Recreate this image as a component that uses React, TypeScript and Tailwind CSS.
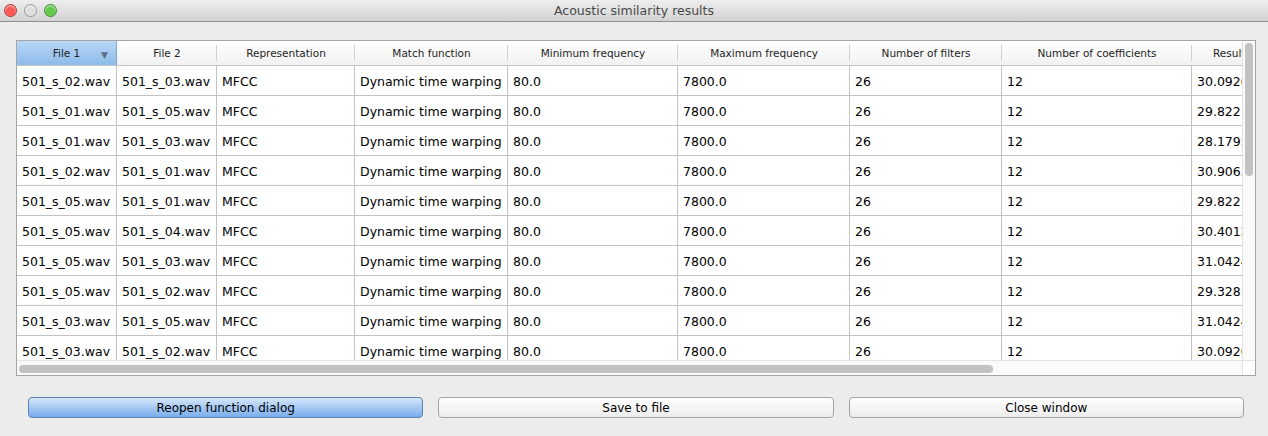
const columns = [
  { title: "File 1", w: "w-[100px]" },
  { title: "File 2", w: "w-[100px]" },
  { title: "Representation", w: "w-[138px]" },
  { title: "Match function", w: "w-[153px]" },
  { title: "Minimum frequency", w: "w-[170px]" },
  { title: "Maximum frequency", w: "w-[172px]" },
  { title: "Number of filters", w: "w-[152px]" },
  { title: "Number of coefficients", w: "w-[190px]" },
  { title: "Result", w: "w-[150px]" },
];

const rows = [
  ["501_s_02.wav", "501_s_03.wav", "30.0920"],
  ["501_s_01.wav", "501_s_05.wav", "29.8221"],
  ["501_s_01.wav", "501_s_03.wav", "28.1795"],
  ["501_s_02.wav", "501_s_01.wav", "30.9063"],
  ["501_s_05.wav", "501_s_01.wav", "29.8221"],
  ["501_s_05.wav", "501_s_04.wav", "30.4012"],
  ["501_s_05.wav", "501_s_03.wav", "31.0424"],
  ["501_s_05.wav", "501_s_02.wav", "29.3281"],
  ["501_s_03.wav", "501_s_05.wav", "31.0424"],
  ["501_s_03.wav", "501_s_02.wav", "30.0920"],
];

function TrafficLight({ color }: { color: string }) {
  return (
    <div
      className={`h-[13px] w-[13px] rounded-full border border-black/30 ${color} shadow-[inset_0_1px_2px_rgba(255,255,255,0.7)]`}
    />
  );
}

function Button({ label, primary }: { label: string; primary?: boolean }) {
  return (
    <button
      className={
        primary
          ? "flex-1 h-[21px] rounded-[4px] border border-[#5e7fb0] bg-gradient-to-b from-[#d6e7fb] via-[#a6c9f3] to-[#78adee] text-[12px] text-black"
          : "flex-1 h-[21px] rounded-[4px] border border-[#a3a3a3] bg-gradient-to-b from-[#ffffff] to-[#ececec] text-[12px] text-black"
      }
    >
      {label}
    </button>
  );
}

export default function App() {
  return (
    <div className="h-[436px] w-[1268px] overflow-hidden bg-[#ececec] font-['DejaVu_Sans',sans-serif] flex flex-col">
      {/* title bar */}
      <div className="relative h-[22px] flex-shrink-0 flex items-center justify-center bg-gradient-to-b from-[#eeeeee] to-[#d3d3d3] border-b border-[#8f8f8f]">
        <div className="absolute left-[4px] top-[4px] flex gap-[7px]">
          <TrafficLight color="bg-[#fc5753]" />
          <TrafficLight color="bg-[#dedede]" />
          <TrafficLight color="bg-[#5fc94a]" />
        </div>
        <span className="pt-[1px] text-[12.5px] text-[#4a4a4a]">Acoustic similarity results</span>
      </div>

      {/* table */}
      <div className="mt-[18px] ml-[16px] mr-[12px] h-[336px] relative border border-[#a5a5a5] bg-white overflow-hidden">
        <div className="flex h-[25px] border-b border-[#c3c3c3] bg-gradient-to-b from-white to-[#f1f1f1] text-[10.5px] text-[#1e1e1e]">
          {columns.map((c, i) => (
            <div
              key={c.title}
              className={`${c.w} flex-shrink-0 relative flex items-center pt-[2px] overflow-hidden whitespace-nowrap ${
                i === 8 ? "justify-start pl-[21px]" : "justify-center"
              } ${
                i === 0
                  ? "bg-gradient-to-b from-[#b9d7f6] to-[#8dbbea] border-r border-[#7fa7d6]"
                  : ""
              }`}
            >
              {i > 0 && <div className="absolute right-0 top-[4px] h-[16px] w-px bg-[#d0d0d0]" />}
              <span>{c.title}</span>
              {i === 0 && (
                <span className="absolute right-[8px] top-[8px] text-[9px] text-[#5a6f86]">▼</span>
              )}
            </div>
          ))}
        </div>
        {rows.map((r, ri) => {
          const cells = [r[0], r[1], "MFCC", "Dynamic time warping", "80.0", "7800.0", "26", "12", r[2]];
          return (
            <div key={ri} className="flex h-[30px] border-b border-[#c3c3c3] text-[12.5px] text-black">
              {cells.map((v, ci) => (
                <div
                  key={ci}
                  className={`${columns[ci].w} flex-shrink-0 flex items-center pt-[3px] px-[5px] border-r border-[#c3c3c3] whitespace-nowrap overflow-hidden`}
                >
                  {v}
                </div>
              ))}
            </div>
          );
        })}

        {/* vertical scrollbar */}
        <div className="absolute right-0 top-0 bottom-[15px] w-[13px] bg-[#fafafa] border-l border-[#e3e3e3]">
          <div className="absolute left-[2px] top-[2px] h-[133px] w-[8px] rounded-full bg-[#c2c2c2]" />
        </div>
        {/* horizontal scrollbar */}
        <div className="absolute left-0 right-[13px] bottom-0 h-[15px] bg-[#fafafa] border-t border-[#e3e3e3]">
          <div className="absolute left-[2px] top-[4px] h-[8px] w-[974px] rounded-full bg-[#c2c2c2]" />
        </div>
        <div className="absolute right-0 bottom-0 h-[15px] w-[13px] bg-white border-l border-t border-[#e3e3e3]" />
      </div>

      {/* buttons */}
      <div className="mt-[21px] ml-[28px] mr-[24px] flex gap-[15px]">
        <Button label="Reopen function dialog" primary />
        <Button label="Save to file" />
        <Button label="Close window" />
      </div>
    </div>
  );
}
